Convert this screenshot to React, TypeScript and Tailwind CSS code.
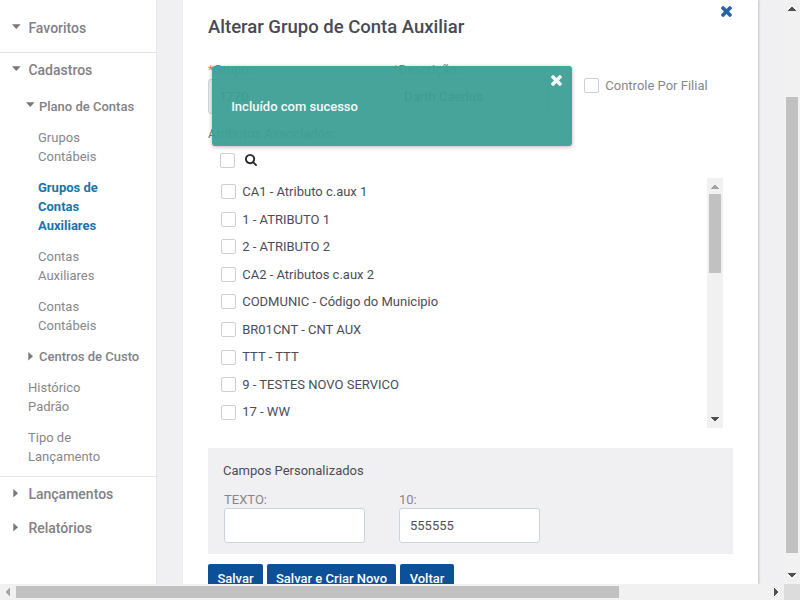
import React from "react";

type Dir = "up" | "down" | "left" | "right";

const TRIANGLES: Record<Dir, string> = {
  up: "M0 4V3h1V2h1V1h1V0h2v1h1v1h1v1h1v1z",
  down: "M0 0v1h1v1h1v1h1v1h2V3h1V2h1V1h1V0z",
  left: "M4 0H3v1H2v1H1v1H0v2h1v1h1v1h1v1h1z",
  right: "M0 0h1v1h1v1h1v1h1v2H3v1H2v1H1v1H0z",
};

function Triangle({ dir, className = "" }: { dir: Dir; className?: string }) {
  const vertical = dir === "up" || dir === "down";
  return (
    <svg
      width={vertical ? 8 : 4}
      height={vertical ? 4 : 8}
      viewBox={vertical ? "0 0 8 4" : "0 0 4 8"}
      shapeRendering="crispEdges"
      className={`block shrink-0 ${className}`}
    >
      <path d={TRIANGLES[dir]} fill="currentColor" />
    </svg>
  );
}

function CloseIcon({ className = "" }: { className?: string }) {
  return (
    <svg width="11" height="11" viewBox="302 366 1188 1188" className={`block ${className}`}>
      <path
        fill="currentColor"
        d="M1490 1322q0 40-28 68l-136 136q-28 28-68 28t-68-28l-294-294-294 294q-28 28-68 28t-68-28l-136-136q-28-28-28-68t28-68l294-294-294-294q-28-28-28-68t28-68l136-136q28-28 68-28t68 28l294 294 294-294q28-28 68-28t68 28l136 136q28 28 28 68t-28 68l-294 294 294 294q28 28 28 68z"
      />
    </svg>
  );
}

function Caret({ open, small }: { open?: boolean; small?: boolean }) {
  return (
    <svg
      width={open ? 9 : 5}
      height={open ? 5 : 9}
      viewBox={open ? "0 0 9 5" : "0 0 5 9"}
      className={`block shrink-0 ${small ? "-ml-px" : ""} ${
        open ? (small ? "-mt-[4px]" : "-mt-[3px]") : "ml-px -mt-px"
      }`}
    >
      <path d={open ? "M0 .3h8.6L4.3 4.9z" : "M.3 0v8.6L5 4.3z"} fill="#77777d" />
    </svg>
  );
}

function Section({ label, open, className }: { label: string; open?: boolean; className: string }) {
  return (
    <div className={`flex items-center text-[14px] font-medium leading-[20px] text-[#818187] ${className}`}>
      <span className="flex w-[16.4px]">
        <Caret open={open} />
      </span>
      {label}
    </div>
  );
}

function SubSection({ label, open }: { label: string; open?: boolean }) {
  return (
    <div className="flex h-[19px] items-center pl-[27px] text-[13px] font-medium text-[#818187]">
      <span className="flex w-[12px]">
        <Caret open={open} small />
      </span>
      {label}
    </div>
  );
}

function Leaf({ lines, active, top }: { lines: string[]; active?: boolean; top?: boolean }) {
  return (
    <div
      className={`mt-3 text-[13px] leading-[19px] ${top ? "pl-[28px]" : "pl-[38px]"} ${
        active ? "font-bold text-[#1b74a8]" : "text-[#87878b]"
      }`}
    >
      {lines.map((line) => (
        <div key={line}>{line}</div>
      ))}
    </div>
  );
}

function Sidebar() {
  return (
    <nav className="h-full w-[157px] shrink-0 overflow-hidden whitespace-nowrap border-r border-[#e4e5e8] bg-white">
      <div className="h-[53px] border-b border-[#e0e4e8] pt-[18px]">
        <Section label="Favoritos" open className="pl-[12px]" />
      </div>
      <div className="h-[424px] border-b border-[#e6e7ea] pt-[7px]">
        <Section label="Cadastros" open className="mb-[17px] pl-[12px]" />
        <SubSection label="Plano de Contas" open />
        <Leaf lines={["Grupos", "Contábeis"]} />
        <Leaf lines={["Grupos de", "Contas", "Auxiliares"]} active />
        <Leaf lines={["Contas", "Auxiliares"]} />
        <Leaf lines={["Contas", "Contábeis"]} />
        <div className="h-3" />
        <SubSection label="Centros de Custo" />
        <Leaf lines={["Histórico", "Padrão"]} top />
        <Leaf lines={["Tipo de", "Lançamento"]} top />
      </div>
      <Section label="Lançamentos" className="pl-[12px] pt-[7px]" />
      <Section label="Relatórios" className="pl-[12px] pt-[14px]" />
    </nav>
  );
}

function Check() {
  return <span className="block h-[15px] w-[15px] shrink-0 rounded-[2px] border border-[#cfcfd2] bg-white" />;
}

const ATTRIBUTES = [
  "CA1 - Atributo c.aux 1",
  "1 - ATRIBUTO 1",
  "2 - ATRIBUTO 2",
  "CA2 - Atributos c.aux 2",
  "CODMUNIC - Código do Municipio",
  "BR01CNT - CNT AUX",
  "TTT - TTT",
  "9 - TESTES NOVO SERVICO",
  "17 - WW",
];

function Field({ label, value, required, disabled, className = "" }: {
  label: string;
  value: string;
  required?: boolean;
  disabled?: boolean;
  className?: string;
}) {
  return (
    <div className={className}>
      <div className={`h-[17px] text-[#87878b] ${required ? "leading-[15px]" : "leading-[17px]"}`}>
        {required && <span className="text-[#e8834a]">*</span>}
        {label}
      </div>
      <div
        className={`h-[35px] rounded-[3px] border border-[#ccd3da] px-[10px] leading-[33px] text-[#50505a] ${
          disabled ? "bg-[#eef0f2]" : "bg-white"
        }`}
      >
        {value}
      </div>
    </div>
  );
}

function Toast() {
  return (
    <div className="absolute left-[212px] top-[66px] flex h-[80px] w-[360px] items-center rounded-[3px] bg-[#3c9f95]/95 pl-[19.2px] pt-[2px] text-[13px] font-medium text-[#f4fafa] shadow-[0_1px_4px_rgba(0,0,0,0.28)]">
      Incluído com sucesso
      <CloseIcon className="absolute right-[10px] top-[9px]" />
    </div>
  );
}

function Button({ children, className }: { children: string; className: string }) {
  return (
    <button className={`h-[29px] shrink-0 rounded-[2px] bg-[#0c5097] text-center text-[13px] font-medium text-white ${className}`}>
      {children}
    </button>
  );
}

function Panel() {
  return (
    <main className="ml-[26px] h-full w-[575px] shrink-0 overflow-hidden whitespace-nowrap bg-white pl-[25px] text-[13px] shadow-[1px_0_2px_rgba(0,0,0,0.2)]">
      <header className="flex h-[61px] justify-between pr-[26px]">
        <h1 className="pt-[15px] text-[18.5px] font-medium leading-[24px] text-[#4a4a54]">
          Alterar Grupo de Conta Auxiliar
        </h1>
        <CloseIcon className="mt-[6.4px] text-[#2862a5]" />
      </header>
      <div className="flex h-[63px] pt-px">
        <Field label="Grupo:" value="1770" required disabled className="w-[155px]" />
        <Field label="Descrição:" value="Darth Caedus" required className="ml-[30px] w-[155px]" />
        <div className="ml-[36px] mt-[16px] flex h-[15px] items-center gap-[6.3px] text-[#87878b]">
          <Check />
          Controle Por Filial
        </div>
      </div>
      <div className="h-[20px] leading-[20px] text-[#77777d]">Atributos Associados:</div>
      <div className="flex h-[34px] items-start pl-[12px] pt-[9px]">
        <Check />
        <svg width="12" height="12" viewBox="64 128 1664 1664" className="ml-[10px] mt-px block">
          <path
            fill="#28282c"
            d="M1216 832q0-185-131.5-316.5t-316.5-131.5-316.5 131.5-131.5 316.5 131.5 316.5 316.5 131.5 316.5-131.5 131.5-316.5zm512 832q0 52-38 90t-90 38q-54 0-90-38l-343-342q-179 124-399 124-143 0-273.5-55.5t-225-150-150-225-55.5-273.5 55.5-273.5 150-225 225-150 273.5-55.5 273.5 55.5 225 150 150 225 55.5 273.5q0 220-124 399l343 343q37 37 37 90z"
          />
        </svg>
      </div>
      <div className="flex h-[250px] w-[515px] justify-between">
        <ul className="pl-[13px]">
          {ATTRIBUTES.map((name) => (
            <li key={name} className="flex h-[27.56px] items-center gap-[6.2px] text-[#4c4c57]">
              <Check />
              {name}
            </li>
          ))}
        </ul>
        <div className="flex w-4 flex-col items-center bg-[#f1f1f1]">
          <Triangle dir="up" className="mt-[7px] text-[#a3a3a3]" />
          <div className="mt-[5px] h-[79px] w-[12px] bg-[#c1c1c1]" />
          <Triangle dir="down" className="mb-[7px] mt-auto text-[#505050]" />
        </div>
      </div>
      <section className="mt-[20px] h-[106px] w-[525px] bg-[#f0f0f3] pl-[16px] pt-[13px]">
        <h2 className="-ml-px h-[30px] leading-[20px] text-[#4c4c57]">Campos Personalizados</h2>
        <div className="flex gap-[34px]">
          <Field label="TEXTO:" value="" className="w-[141px]" />
          <Field label="10:" value="555555" className="w-[141px]" />
        </div>
      </section>
      <div className="mt-[10px] flex gap-[4px]">
        <Button className="w-[55px]">Salvar</Button>
        <Button className="w-[129px]">Salvar e Criar Novo</Button>
        <Button className="w-[54px]">Voltar</Button>
      </div>
    </main>
  );
}

export default function App() {
  return (
    <div className="relative flex h-[600px] w-[800px] flex-col overflow-hidden bg-[#f0f0f3] font-[Roboto,sans-serif]">
      <div className="flex h-[584px]">
        <Sidebar />
        <Panel />
        <div className="ml-auto flex w-4 shrink-0 flex-col items-center bg-[#f1f1f1]">
          <Triangle dir="up" className="mt-[7px] text-[#505050]" />
          <div className="mt-[86px] h-[456px] w-[12px] bg-[#c1c1c1]" />
          <Triangle dir="down" className="mb-[7px] mt-auto text-[#505050]" />
        </div>
      </div>
      <div className="flex h-4 bg-[#f1f1f1]">
        <div className="flex w-[784px] items-center">
          <Triangle dir="left" className="ml-[6px] text-[#a3a3a3]" />
          <div className="ml-[6px] h-[12px] w-[603px] bg-[#c1c1c1]" />
          <Triangle dir="right" className="ml-auto mr-[6px] text-[#505050]" />
        </div>
        <div className="w-4 bg-[#dcdcdc]" />
      </div>
      <Toast />
    </div>
  );
}
